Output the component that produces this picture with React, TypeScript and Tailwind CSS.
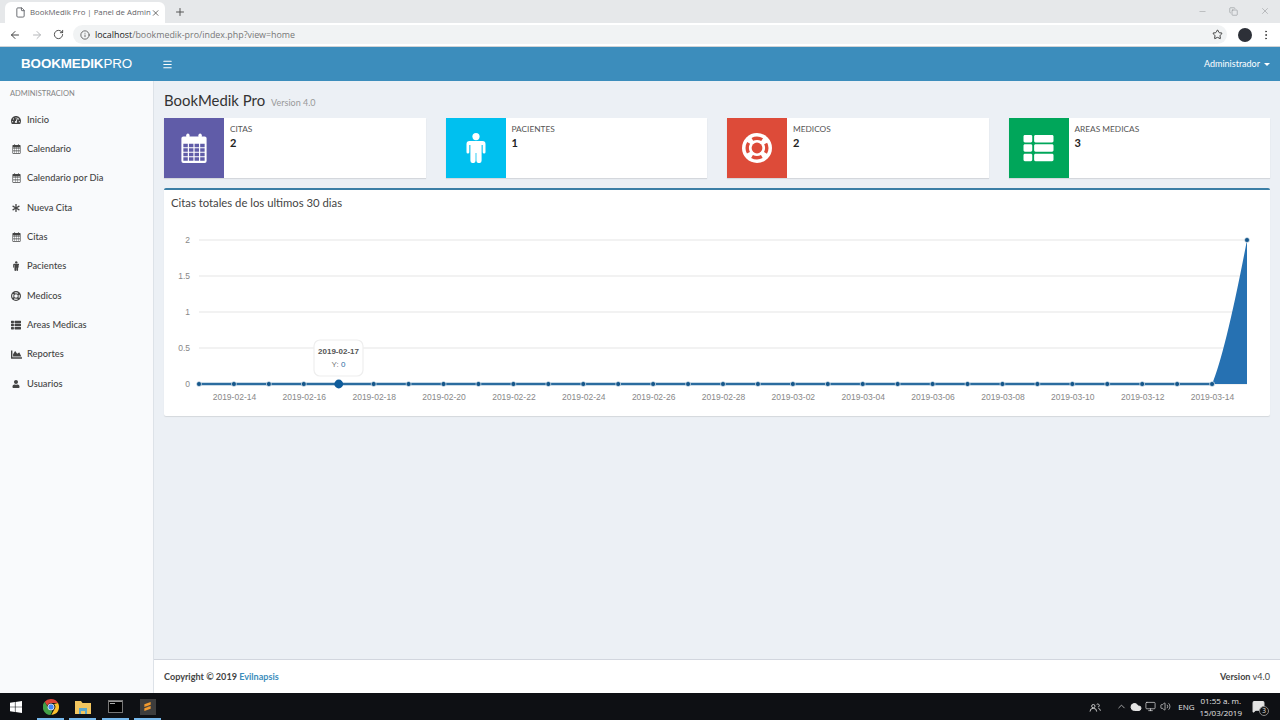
import type { ReactNode } from "react";
import {
  ArrowLeft,
  ArrowRight,
  ChevronUp,
  Cloud,
  Copy,
  EllipsisVertical,
  File,
  Info,
  Menu,
  MessageSquare,
  Minus,
  Monitor,
  Plus,
  RotateCw,
  Star,
  Volume2,
  X,
} from "lucide-react";
import { FaAsterisk, FaChartArea, FaTachometerAlt, FaThList, FaUser } from "react-icons/fa";

// FA4 style calendar, cells are cut out so the box colour shows through
function CalendarIcon({ className, cols = 4 }: { className?: string; cols?: number }) {
  let d = "M1 5.5a2 2 0 0 1 2-2h22a2 2 0 0 1 2 2V29a2 2 0 0 1-2 2H3a2 2 0 0 1-2-2Z";
  const cellW = (22 - (cols - 1) * 1.2) / cols;
  for (let r = 0; r < 4; r++) {
    for (let c = 0; c < cols; c++) {
      const x = 3 + c * (cellW + 1.2);
      const y = 11 + r * 4.7;
      d += `M${x} ${y}h${cellW}v3.6h-${cellW}Z`;
    }
  }
  return (
    <svg viewBox="0 0 28 32" className={className} fill="currentColor">
      <path fillRule="evenodd" d={d} />
      <rect x="6" y="0.5" width="3.4" height="7" rx="1.7" />
      <rect x="18.6" y="0.5" width="3.4" height="7" rx="1.7" />
    </svg>
  );
}

function MaleIcon({ className }: { className?: string }) {
  return (
    <svg viewBox="0 0 20 30" className={className} fill="currentColor">
      <circle cx="10" cy="3.6" r="3.6" />
      <path d="M3.5 8H16.5a3 3 0 0 1 3 3v8.2a1.4 1.4 0 0 1-2.8 0V12H15.600V27.500a2.600 2.600 0 0 1-5.200 0V20H9.600V27.500a2.600 2.600 0 0 1-5.200 0V12H3.300V19.200a1.400 1.400 0 0 1-2.800 0V11a3 3 0 0 1 3-3Z" />
    </svg>
  );
}

// white disc with four curved slots and a hole in the middle
function RingIcon({ className, cut }: { className?: string; cut: string }) {
  return (
    <svg viewBox="0 0 30 30" className={className}>
      <circle cx="15" cy="15" r="15" fill="currentColor" />
      <circle cx="15" cy="15" r="5.400" fill={cut} />
      <circle
        cx="15"
        cy="15"
        r="9.800"
        fill="none"
        stroke={cut}
        strokeWidth="3.400"
        strokeDasharray="10.260 5.130"
        strokeDashoffset="5.130"
      />
    </svg>
  );
}

const navItems: { label: string; icon: ReactNode }[] = [
  { label: "Inicio", icon: <FaTachometerAlt className="size-[10px]" /> },
  { label: "Calendario", icon: <CalendarIcon className="h-[10px] w-[9px]" /> },
  { label: "Calendario por Dia", icon: <CalendarIcon className="h-[10px] w-[9px]" cols={3} /> },
  { label: "Nueva Cita", icon: <FaAsterisk className="size-[8px]" /> },
  { label: "Citas", icon: <CalendarIcon className="h-[10px] w-[9px]" /> },
  { label: "Pacientes", icon: <MaleIcon className="h-[10px] w-[6.500px]" /> },
  { label: "Medicos", icon: <RingIcon className="size-[10px]" cut="#f9fafc" /> },
  { label: "Areas Medicas", icon: <FaThList className="size-[10px]" /> },
  { label: "Reportes", icon: <FaChartArea className="size-[11px]" /> },
  { label: "Usuarios", icon: <FaUser className="size-[8px]" /> },
];

const boxes: { label: string; value: number; color: string; icon: ReactNode }[] = [
  { label: "CITAS", value: 2, color: "bg-[#605ca8]", icon: <CalendarIcon className="h-[31px] w-[28px]" /> },
  { label: "PACIENTES", value: 1, color: "bg-[#00c0ef]", icon: <MaleIcon className="h-[30px] w-[20px]" /> },
  { label: "MEDICOS", value: 2, color: "bg-[#dd4b39]", icon: <RingIcon className="size-[30px]" cut="#dd4b39" /> },
  { label: "AREAS MEDICAS", value: 3, color: "bg-[#00a65a]", icon: <FaThList className="h-[30px] w-[31px]" /> },
];

const startX = 199;
const step = (1247 - 199) / 30;
const days = Array.from({ length: 31 }, (_, i) => {
  const date = new Date(Date.UTC(2019, 1, 13 + i));
  return { x: startX + i * step, label: date.toISOString().slice(0, 10) };
});

function Chart() {
  const grid = [
    { y: 240, label: "2" },
    { y: 276, label: "1.5" },
    { y: 312, label: "1" },
    { y: 348, label: "0.5" },
    { y: 384, label: "0" },
  ];
  const lastFlat = days[29].x;
  return (
    <svg viewBox="164 216 1106 200" className="block h-[200px] w-full font-['Liberation_Sans',sans-serif]">
      {grid.map((g) => (
        <g key={g.y}>
          <line x1="199" x2="1247" y1={g.y} y2={g.y} stroke="#eeeeee" strokeWidth="1.5" />
          <text x="190" y={g.y + 3} textAnchor="end" fontSize="8.5" fill="#888888">
            {g.label}
          </text>
        </g>
      ))}
      <path d={`M${lastFlat} 384Q1226 350 1247 240V384Z`} fill="#2671b2" />
      <line x1="199" x2={lastFlat} y1="384" y2="384" stroke="#2b6c9f" strokeWidth="2.4" />
      {days.map((d, i) =>
        i === 4 ? null : <circle key={d.label} cx={d.x} cy={i === 30 ? 240 : 384} r="2.5" fill="#14568a" stroke="#ffffff" strokeWidth="0.6" />,
      )}
      <circle cx={days[4].x} cy="384" r="4.4" fill="#0f5c9b" />
      {days
        .filter((_, i) => i % 2 === 1)
        .map((d) => (
          <text key={d.label} x={d.x + 0.5} y="399.5" textAnchor="middle" fontSize="8.5" fill="#888888">
            {d.label}
          </text>
        ))}
      <rect x="314" y="340" width="49" height="36" rx="6" fill="#ffffff" fillOpacity="0.95" stroke="#eeeeee" strokeWidth="1.2" />
      <text x="338.5" y="354" textAnchor="middle" fontSize="8" fontWeight="700" fill="#555555">
        2019-02-17
      </text>
      <text x="338.5" y="367" textAnchor="middle" fontSize="8" fill="#777777">
        Y:{" "}
        <tspan fill="#2b6c9f">0</tspan>
      </text>
    </svg>
  );
}

function BrowserChrome() {
  return (
    <div className="shrink-0 font-['Open_Sans',sans-serif]">
      {/* Tabs */}
      <div className="flex h-[23px] items-end bg-[#e6e8ea] pl-[5px]">
        <div className="flex h-[21px] w-[160px] items-center rounded-t-[6px] bg-white pl-[10px] pr-[5px]">
          <File className="size-[11px] shrink-0 text-[#5f6368]" />
          <span className="ml-[4px] whitespace-nowrap text-[7.800px] text-[#5f6368]">
            BookMedik Pro | Panel de Admin
          </span>
          <X className="ml-auto size-[10px] text-[#444]" />
        </div>
        <Plus className="mb-[5px] ml-[9px] size-[12px] text-[#555]" />
        <div className="mb-[7px] ml-auto flex items-center gap-[22px] pr-[10px] text-[#8a8d90]">
          <Minus className="size-[9px]" strokeWidth={1.2} />
          <Copy className="size-[9px]" strokeWidth={1.5} />
          <X className="size-[10px]" strokeWidth={1.2} />
        </div>
      </div>
      {/* Address bar */}
      <div className="flex h-[24px] items-center border-b border-[#cfd3d6] bg-white pl-[9px]">
        <ArrowLeft className="size-[12px] text-[#444]" />
        <ArrowRight className="ml-[10px] size-[12px] text-[#b5b7ba]" />
        <RotateCw className="ml-[10px] size-[11px] text-[#444]" />
        <div className="ml-[9px] flex h-[19px] w-[1154px] items-center rounded-full bg-[#f1f3f4] pl-[7px]">
          <Info className="size-[10px] text-[#555]" />
          <span className="ml-[5px] text-[8.900px] text-[#777]">
            <span className="text-[#222]">localhost</span>/bookmedik-pro/index.php?view=home
          </span>
          <Star className="ml-auto mr-[4px] size-[11px] text-[#333]" />
        </div>
        <div className="ml-[11px] size-[14px] rounded-full bg-[#2d3038]" />
        <EllipsisVertical className="ml-[8px] size-[12px] text-[#444]" />
      </div>
    </div>
  );
}

function Taskbar() {
  const underline = "absolute bottom-0 h-[2px] w-[27px] bg-[#76b9ed]";
  return (
    <div className="flex h-[27px] shrink-0 items-center bg-[#0e1014] font-['Open_Sans',sans-serif] text-[#e4e4e4]">
      <svg viewBox="0 0 12 12" className="ml-[10px] size-[12px]" fill="#ffffff">
        <path d="M0 1.8 4.9 1.1V5.7H0ZM5.5 1 12 0V5.7H5.5ZM0 6.3H4.9V10.9L0 10.2ZM5.5 6.3H12V12L5.5 11Z" />
      </svg>
      <div className="relative ml-[15px] flex h-full w-[27px] items-center justify-center">
        <svg viewBox="0 0 16 16" className="size-[16px]">
          <path d="M8 0a8 8 0 0 1 7 4H8a4 4 0 0 0-3.800 2.700L1.700 2.800A8 8 0 0 1 8 0Z" fill="#db4437" />
          <path d="M15 4a8 8 0 0 1-6.700 12l3-5.500A4 4 0 0 0 11 5Z" fill="#fbc02d" />
          <path d="M1.700 2.800 5 8.500a4 4 0 0 0 4.500 3L7.500 16A8 8 0 0 1 1.700 2.800Z" fill="#43a047" />
          <circle cx="8" cy="8" r="3.100" fill="#4285f4" stroke="#ffffff" strokeWidth="0.8" />
        </svg>
        <span className={underline} />
      </div>
      <div className="relative ml-[5px] flex h-full w-[27px] items-center justify-center">
        <svg viewBox="0 0 16 14" className="h-[14px] w-[16px]">
          <path d="M0 1h6l1.500 2H16v11H0Z" fill="#f3c65f" />
          <path d="M4 8h8v6h-2v-3H6v3H4Z" fill="#5fa8c9" />
        </svg>
        <span className={underline} />
      </div>
      <div className="relative ml-[6px] flex h-full w-[27px] items-center justify-center">
        <div className="h-[13px] w-[15px] border border-[#777] bg-black">
          <div className="h-px bg-[#999]" />
          <div className="ml-px mt-px h-px w-[5px] bg-[#aaa]" />
        </div>
        <span className={underline} />
      </div>
      <div className="relative ml-[5px] flex h-full w-[27px] items-center justify-center">
        <div className="flex size-[16px] items-center justify-center bg-[#3d3d3d]">
          <svg viewBox="0 0 10 12" className="h-[11px] w-[9px]" fill="#f29a2e">
            <path d="M1.500 3.500 8.500 1v3L1.500 6.500ZM1.500 5 8.500 7.500V5.500L1.500 8V11L8.500 8.500V7Z" />
          </svg>
        </div>
        <span className={underline} />
      </div>
      <div className="ml-auto flex items-center">
        <svg viewBox="0 0 14 12" className="h-[10px] w-[12px]" fill="none" stroke="#e4e4e4" strokeWidth="1">
          <circle cx="5" cy="5" r="2" />
          <path d="M1 11.500a4 4 0 0 1 8 0M9 3a1.800 1.800 0 1 1 1.500 3M11 7.500a3.500 3.500 0 0 1 2.500 3" />
        </svg>
        <ChevronUp className="ml-[15px] size-[11px]" strokeWidth={1.5} />
        <Cloud className="ml-[3px] size-[12px] fill-[#e4e4e4]" />
        <Monitor className="ml-[3px] size-[11px]" strokeWidth={1.5} />
        <Volume2 className="ml-[4px] size-[11px]" strokeWidth={1.5} />
        <span className="ml-[7px] text-[8px]">ENG</span>
        <div className="ml-[5px] flex flex-col items-center text-[8px] leading-[12px]">
          <span>01:55 a. m.</span>
          <span>15/03/2019</span>
        </div>
        <div className="relative ml-[10px] mr-[15px]">
          <MessageSquare className="size-[13px] fill-[#e4e4e4]" />
          <span className="absolute -bottom-[3px] -right-[4px] flex size-[10px] items-center justify-center rounded-full border border-[#888] bg-[#111] text-[6.500px]">
            3
          </span>
        </div>
      </div>
    </div>
  );
}

export default function App() {
  return (
    <div className="flex h-[720px] w-[1280px] flex-col overflow-hidden bg-[#ecf0f5] font-['Lato','Noto_Sans',sans-serif] text-[#333]">
      <BrowserChrome />

      {/* Top navbar */}
      <header className="flex h-[34px] shrink-0 items-center bg-[#3c8dbc] text-white">
        <div className="w-[153px] pl-[21px] font-['Liberation_Sans',sans-serif] text-[13.400px] tracking-[-0.1px]">
          <b>BOOKMEDIK</b>PRO
        </div>
        <Menu className="ml-[9px] size-[11px]" strokeWidth={2.5} />
        <div className="ml-auto mr-[10px] flex items-center gap-[4px] text-[9px]">
          Administrador
          <span className="mt-[1px] border-x-[3px] border-t-[3px] border-x-transparent border-t-white" />
        </div>
      </header>

      <div className="flex min-h-0 flex-1">
        {/* Sidebar */}
        <aside className="w-[154px] shrink-0 border-r border-[#dde2e8] bg-[#f9fafc]">
          <p className="pl-[10px] pt-[8px] text-[7.500px] leading-[10px] text-[#848484]">ADMINISTRACION</p>
          <nav className="mt-[6px]">
            {navItems.map((item) => (
              <div key={item.label} className="flex h-[29.350px] items-center text-[#444]">
                <span className="flex w-[27px] justify-center pl-[6px] pr-[1px]">{item.icon}</span>
                <span className="text-[9.300px] font-medium text-[#444]">{item.label}</span>
              </div>
            ))}
          </nav>
        </aside>

        <div className="flex min-w-0 flex-1 flex-col">
          <main className="flex-1 px-[10px] pt-[9px]">
            <h1 className="flex h-[20px] items-baseline gap-[6px] text-[14.900px] leading-[20px] text-[#333]">
              BookMedik Pro <small className="text-[9px] text-[#999]">Version 4.0</small>
            </h1>

            {/* Info boxes */}
            <div className="mt-[8px] grid grid-cols-4 gap-x-[20px]">
              {boxes.map((box) => (
                <div key={box.label} className="flex h-[60px] bg-white shadow-[0_1px_1px_rgba(0,0,0,0.1)]">
                  <div className={`flex w-[60px] items-center justify-center text-white ${box.color}`}>{box.icon}</div>
                  <div className="pl-[6px] pt-[5px]">
                    <p className="text-[8.300px] leading-[12px] text-[#555]">{box.label}</p>
                    <p className="mt-[1px] text-[11px] font-bold leading-[14px] text-[#222]">{box.value}</p>
                  </div>
                </div>
              ))}
            </div>

            {/* Chart */}
            <section className="mt-[10px] rounded-[2px] border-t-2 border-[#3c7fa6] bg-white shadow-[0_1px_1px_rgba(0,0,0,0.1)]">
              <h3 className="h-[26px] pl-[7px] pt-[5px] text-[11.300px] leading-[16px] text-[#444]">
                Citas totales de los ultimos 30 dias
              </h3>
              <Chart />
            </section>
          </main>

          <footer className="flex h-[34px] shrink-0 items-center justify-between border-t border-[#d2d6de] bg-white px-[10px] text-[9.100px] text-[#444]">
            <p>
              <b>Copyright © 2019 <span className="text-[#3c8dbc]">Evilnapsis</span></b>
            </p>
            <p>
              <b>Version</b> v4.0
            </p>
          </footer>
        </div>
      </div>

      <Taskbar />
    </div>
  );
}
